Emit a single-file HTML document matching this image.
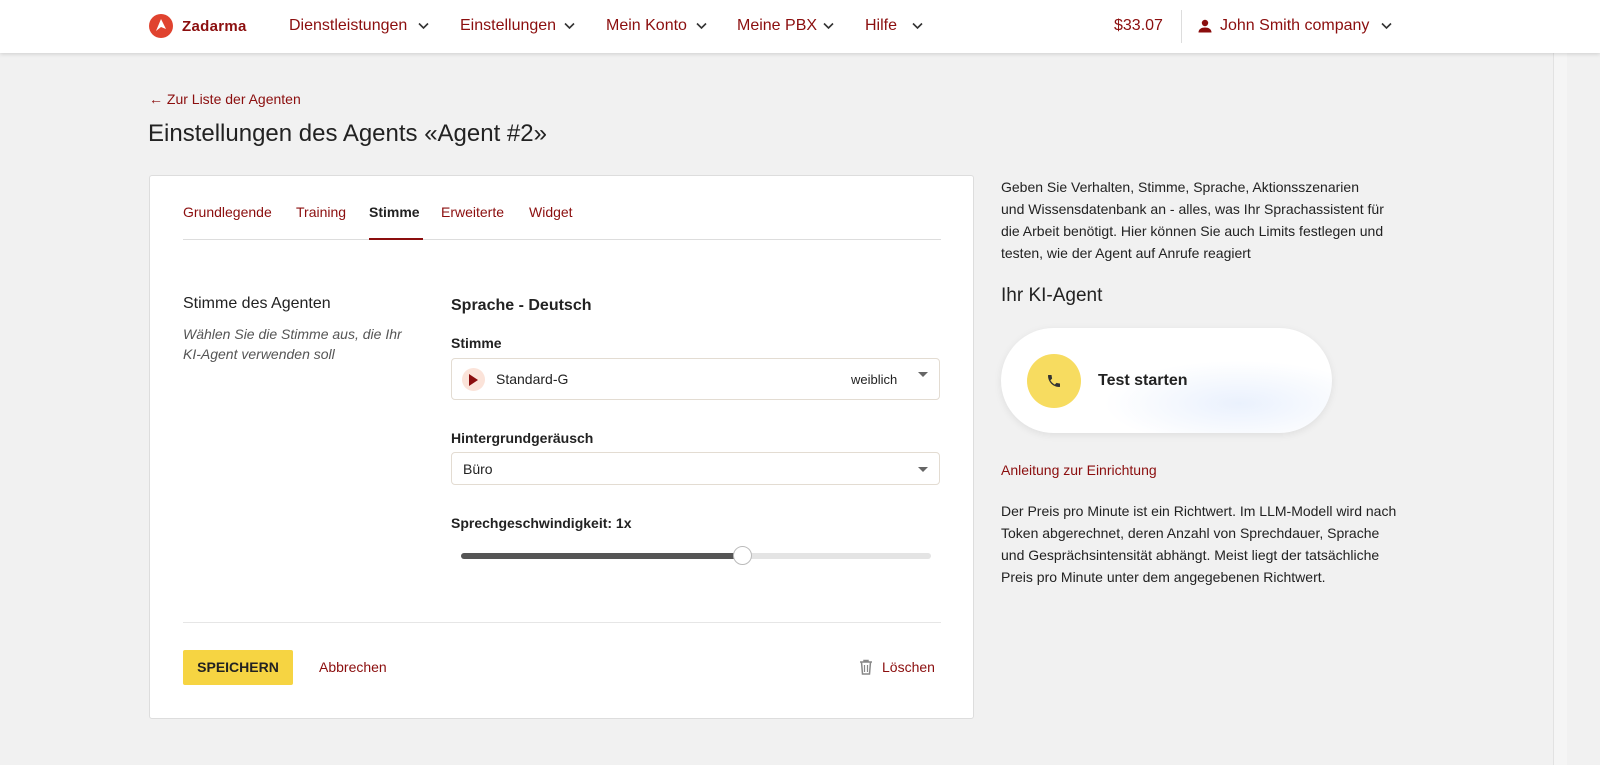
<!DOCTYPE html>
<html><head><meta charset="utf-8"><style>
*{box-sizing:border-box;margin:0;padding:0}
body{width:1600px;height:765px;overflow:hidden;background:#f1f1f1;font-family:"Liberation Sans",Arial,sans-serif;color:#222;position:relative}
.hdr{position:absolute;left:0;top:0;width:1600px;height:53px;background:#fff;box-shadow:0 1px 4px rgba(0,0,0,.15)}
.hdr span{position:absolute;top:17px;font-size:16px;color:#8b0e0e;white-space:nowrap}
.hdr svg.ch{position:absolute;top:22px}
.dark{color:#8b0e0e}
.card{position:absolute;left:149px;top:175px;width:825px;height:544px;background:#fff;border:1px solid #ddd;border-radius:3px}
.abs{position:absolute}
.sel{position:absolute;left:451px;width:489px;border:1px solid #e3dcd2;border-radius:4px;background:#fff}
.tri{position:absolute;right:11px;width:0;height:0;border-left:5px solid transparent;border-right:5px solid transparent;border-top:5px solid #666}
</style></head><body>
<div class="abs" style="left:1553px;top:0;width:14px;height:765px;background:#f5f5f5;border-left:1px solid #e2e2e2"></div>
<div class="hdr">
 <svg class="abs" style="left:149px;top:14px" width="24" height="24" viewBox="0 0 24 24"><circle cx="12" cy="12" r="12" fill="#e0432f"/><path d="M12 5 L17 15 L12 13 L7 17 Z" fill="#fff"/></svg>
 <span style="left:182px;top:18px;font-size:15px;font-weight:bold;letter-spacing:.3px">Zadarma</span>
 <span style="left:289px">Dienstleistungen</span><svg class="ch" style="left:418px" width="11" height="8" viewBox="0 0 11 8"><path d="M1 1.5l4.5 4.5 4.5-4.5" fill="none" stroke="#333" stroke-width="1.6"/></svg>
 <span style="left:460px">Einstellungen</span><svg class="ch" style="left:564px" width="11" height="8" viewBox="0 0 11 8"><path d="M1 1.5l4.5 4.5 4.5-4.5" fill="none" stroke="#333" stroke-width="1.6"/></svg>
 <span style="left:606px">Mein Konto</span><svg class="ch" style="left:696px" width="11" height="8" viewBox="0 0 11 8"><path d="M1 1.5l4.5 4.5 4.5-4.5" fill="none" stroke="#333" stroke-width="1.6"/></svg>
 <span style="left:737px">Meine PBX</span><svg class="ch" style="left:823px" width="11" height="8" viewBox="0 0 11 8"><path d="M1 1.5l4.5 4.5 4.5-4.5" fill="none" stroke="#333" stroke-width="1.6"/></svg>
 <span style="left:865px">Hilfe</span><svg class="ch" style="left:912px" width="11" height="8" viewBox="0 0 11 8"><path d="M1 1.5l4.5 4.5 4.5-4.5" fill="none" stroke="#333" stroke-width="1.6"/></svg>
 <span style="left:1114px">$33.07</span>
 <div class="abs" style="left:1181px;top:10px;width:1px;height:33px;background:#ddd"></div>
 <svg class="abs" style="left:1198px;top:19px" width="14" height="14" viewBox="0 0 14 14"><circle cx="7" cy="4" r="3.2" fill="#8b0e0e"/><path d="M0.5 13.5c0-3.5 3-5 6.5-5s6.5 1.5 6.5 5z" fill="#8b0e0e"/></svg>
 <span style="left:1220px">John Smith company</span><svg class="ch" style="left:1381px" width="11" height="8" viewBox="0 0 11 8"><path d="M1 1.5l4.5 4.5 4.5-4.5" fill="none" stroke="#333" stroke-width="1.6"/></svg>
</div>
<div class="abs dark" style="left:149px;top:91px;font-size:14px">← Zur Liste der Agenten</div>
<div class="abs" style="left:148px;top:120px;font-size:24px;color:#222">Einstellungen des Agents «Agent #2»</div>
<div class="card">
 <div class="abs dark" style="left:33px;top:28px;font-size:14px">Grundlegende</div>
 <div class="abs dark" style="left:146px;top:28px;font-size:14px">Training</div>
 <div class="abs" style="left:219px;top:28px;font-size:14px;font-weight:bold">Stimme</div>
 <div class="abs dark" style="left:291px;top:28px;font-size:14px">Erweiterte</div>
 <div class="abs dark" style="left:379px;top:28px;font-size:14px">Widget</div>
 <div class="abs" style="left:33px;top:63px;width:758px;height:1px;background:#ddd"></div>
 <div class="abs" style="left:219px;top:62px;width:54px;height:2px;background:#8b0e0e"></div>
 <div class="abs" style="left:33px;top:119px;font-size:16px">Stimme des Agenten</div>
 <div class="abs" style="left:33px;top:148px;font-size:14px;font-style:italic;color:#555;line-height:20px;width:230px">Wählen Sie die Stimme aus, die Ihr KI-Agent verwenden soll</div>
 <div class="abs" style="left:301px;top:121px;font-size:16px;font-weight:bold">Sprache - Deutsch</div>
 <div class="abs" style="left:301px;top:159px;font-size:14px;font-weight:bold">Stimme</div>
 <div class="abs" style="left:301px;top:254px;font-size:14px;font-weight:bold">Hintergrundgeräusch</div>
 <div class="abs" style="left:301px;top:339px;font-size:14px;font-weight:bold">Sprechgeschwindigkeit: 1x</div>
 <div class="abs" style="left:311px;top:377px;width:470px;height:6px;border-radius:3px;background:#e4e4e4"></div>
 <div class="abs" style="left:311px;top:377px;width:282px;height:6px;border-radius:3px;background:#555"></div>
 <div class="abs" style="left:583px;top:370px;width:19px;height:19px;border-radius:50%;background:#fff;border:1px solid #bbb"></div>
 <div class="abs" style="left:33px;top:446px;width:758px;height:1px;background:#e6e6e6"></div>
 <div class="abs" style="left:33px;top:474px;width:110px;height:35px;background:#f6d442;border-radius:2px;font-size:14px;font-weight:bold;text-align:center;line-height:35px">SPEICHERN</div>
 <div class="abs dark" style="left:169px;top:483px;font-size:14px">Abbrechen</div>
 <svg class="abs" style="left:709px;top:483px" width="14" height="16" viewBox="0 0 14 16"><path d="M1 3h12M5 3V1.5h4V3M2.5 3l1 12h7l1-12" fill="none" stroke="#888" stroke-width="1.5"/><path d="M5.5 6v7M8.5 6v7" stroke="#888" stroke-width="1.2"/></svg>
 <div class="abs dark" style="left:732px;top:483px;font-size:14px">Löschen</div>
</div>
<div class="sel" style="top:358px;height:42px">
 <div class="abs" style="left:10px;top:9px;width:23px;height:23px;border-radius:50%;background:#fbe3d9"></div>
 <div class="abs" style="left:17px;top:15px;border-top:6px solid transparent;border-bottom:6px solid transparent;border-left:9px solid #8b0e0e"></div>
 <div class="abs" style="left:44px;top:12px;font-size:14px">Standard-G</div>
 <div class="abs" style="left:399px;top:13px;font-size:13px">weiblich</div>
 <div class="tri" style="top:13px"></div>
</div>
<div class="sel" style="top:452px;height:33px">
 <div class="abs" style="left:11px;top:8px;font-size:14px">Büro</div>
 <div class="tri" style="top:14px"></div>
</div>
<div class="abs" style="left:1001px;top:176px;width:384px;font-size:14px;line-height:22px">Geben Sie Verhalten, Stimme, Sprache, Aktionsszenarien und Wissensdatenbank an - alles, was Ihr Sprachassistent für die Arbeit benötigt. Hier können Sie auch Limits festlegen und testen, wie der Agent auf Anrufe reagiert</div>
<div class="abs" style="left:1001px;top:285px;font-size:19px">Ihr KI-Agent</div>
<div class="abs" style="left:1001px;top:328px;width:331px;height:105px;border-radius:53px;background:radial-gradient(ellipse at 72% 72%,#eaf1fd 0,#fff 40%),#fff;box-shadow:0 2px 8px rgba(0,0,0,.08)">
 <div class="abs" style="left:26px;top:26px;width:54px;height:54px;border-radius:50%;background:#f7dc60"></div>
 <svg class="abs" style="left:45px;top:45px" width="16" height="16" viewBox="0 0 24 24"><path d="M6.6 10.8c1.4 2.8 3.8 5.1 6.6 6.6l2.2-2.2c.3-.3.7-.4 1-.2 1.1.4 2.3.6 3.6.6.6 0 1 .4 1 1V20c0 .6-.4 1-1 1C10.6 21 3 13.4 3 4c0-.6.4-1 1-1h3.5c.6 0 1 .4 1 1 0 1.3.2 2.5.6 3.6.1.3 0 .7-.2 1z" fill="#333"/></svg>
 <div class="abs" style="left:97px;top:44px;font-size:16px;font-weight:bold">Test starten</div>
</div>
<div class="abs dark" style="left:1001px;top:462px;font-size:14px">Anleitung zur Einrichtung</div>
<div class="abs" style="left:1001px;top:500px;width:400px;font-size:14px;line-height:22px">Der Preis pro Minute ist ein Richtwert. Im LLM-Modell wird nach Token abgerechnet, deren Anzahl von Sprechdauer, Sprache und Gesprächsintensität abhängt. Meist liegt der tatsächliche Preis pro Minute unter dem angegebenen Richtwert.</div>
</body></html>
